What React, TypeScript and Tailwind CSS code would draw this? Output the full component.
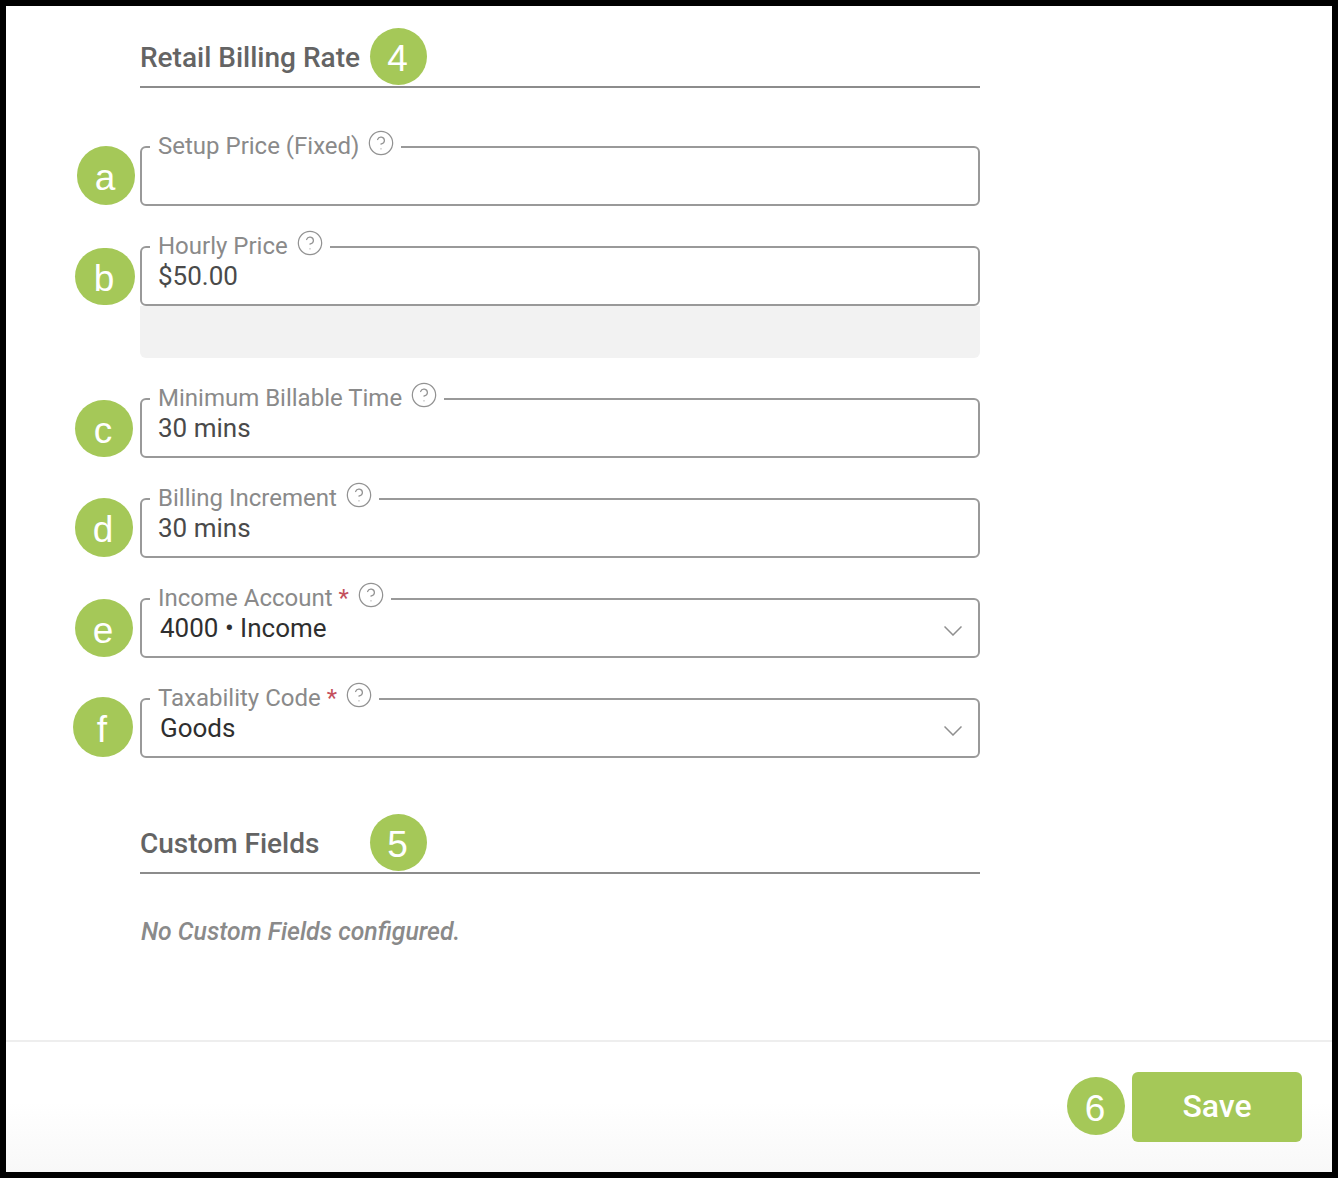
import { CircleHelp } from 'lucide-react';

declare interface fieldProps {
  label: string;
  value?: string;
  badge: string;
  badgeClass: string;
  required?: boolean;
  select?: boolean;
}

const Badge = ({ text, className }: { text: string; className: string }) => (
  <div
    className={`absolute flex items-center justify-center rounded-full bg-[#a5c858] pt-[4px] pr-[2px] text-white text-[37px] leading-none font-['Liberation_Sans',sans-serif] ${className}`}
  >
    {text}
  </div>
);

const Field = ({ label, value, badge, badgeClass, required, select }: fieldProps) => (
  <div className="relative">
    <Badge text={badge} className={badgeClass} />
    <fieldset className="rounded-md border-2 border-[#999999] min-w-0">
      <legend className="ml-2 pl-2 pr-[6px] h-[26px] flex items-center text-[24px] leading-[24px] text-[#8a8a8a]">
        <span className="mb-[2px]">{label}</span>
        {required && <span className="ml-[6px] mb-[2px] text-[#c4505c]">*</span>}
        <CircleHelp size={28} strokeWidth={1.05} className="ml-[8px] mb-[8px] text-[#929292]" />
      </legend>
      <div className={`h-[44px] flex items-start justify-between pr-4 text-[26px] leading-8 ${select ? 'pl-[18px] text-[#2f2f2f]' : 'pl-4 text-[#4a4a4a]'}`}>
        <span>{value}</span>
        {select && (
          <svg width="18" height="10" viewBox="0 0 18 10" fill="none" className="mt-[14px]">
            <path d="M0.5 0.5 L9 9 L17.5 0.5" stroke="#8f8f8f" strokeWidth="1.5" />
          </svg>
        )}
      </div>
    </fieldset>
  </div>
);

const Heading = ({ title, badge }: { title: string; badge: string }) => (
  <div className="relative h-[56px] border-b-2 border-[#8c8c8c] pb-[2px] flex items-center text-[28px] font-medium text-[#646464]">
    {title}
    <Badge text={badge} className="w-[57px] h-[57px] left-[230px] top-[-4px]" />
  </div>
);

const App = () => {
  return (
    <div className="w-[1338px] h-[1178px] bg-black p-[6px] font-['Roboto',sans-serif]">
      <div className="h-full flex flex-col bg-gradient-to-b from-white from-94% to-[#f8f8f8]">
        <main className="flex-1 w-[840px] ml-[134px] pt-[26px]">
          <Heading title="Retail Billing Rate" badge="4" />
          <div className="mt-[46px] flex flex-col gap-7">
            <Field label="Setup Price (Fixed)" badge="a" badgeClass="w-[58px] h-[59px] left-[-63px] top-[12px]" />
            <div>
              <Field label="Hourly Price" value="$50.00" badge="b" badgeClass="w-[60px] h-[57px] left-[-65px] top-[14px]" />
              <div className="h-[52px] rounded-b-md bg-[#f2f2f2]" />
            </div>
            <Field label="Minimum Billable Time" value="30 mins" badge="c" badgeClass="w-[58px] h-[57px] left-[-65px] top-[14px]" />
            <Field label="Billing Increment" value="30 mins" badge="d" badgeClass="w-[58px] h-[59px] left-[-65px] top-[12px]" />
            <Field label="Income Account" value="4000 • Income" badge="e" badgeClass="w-[58px] h-[58px] left-[-65px] top-[13px]" required select />
            <Field label="Taxability Code" value="Goods" badge="f" badgeClass="w-[60px] h-[60px] left-[-67px] top-[11px]" required select />
          </div>
          <div className="mt-[60px]">
            <Heading title="Custom Fields" badge="5" />
          </div>
          <p className="mt-[42px] ml-px text-[24.8px] leading-8 italic font-medium text-[#8a8a8a]">No Custom Fields configured.</p>
        </main>
        <footer className="relative h-[132px] border-t-2 border-[#eeeeee] pt-[30px] pr-[30px] flex justify-end items-start">
          <Badge text="6" className="w-[58px] h-[58px] left-[1061px] top-[35px]" />
          <button className="w-[170px] h-[70px] pb-[2px] rounded-md bg-[#a5c858] text-white text-[32px] font-medium">Save</button>
        </footer>
      </div>
    </div>
  );
};

export default App;
